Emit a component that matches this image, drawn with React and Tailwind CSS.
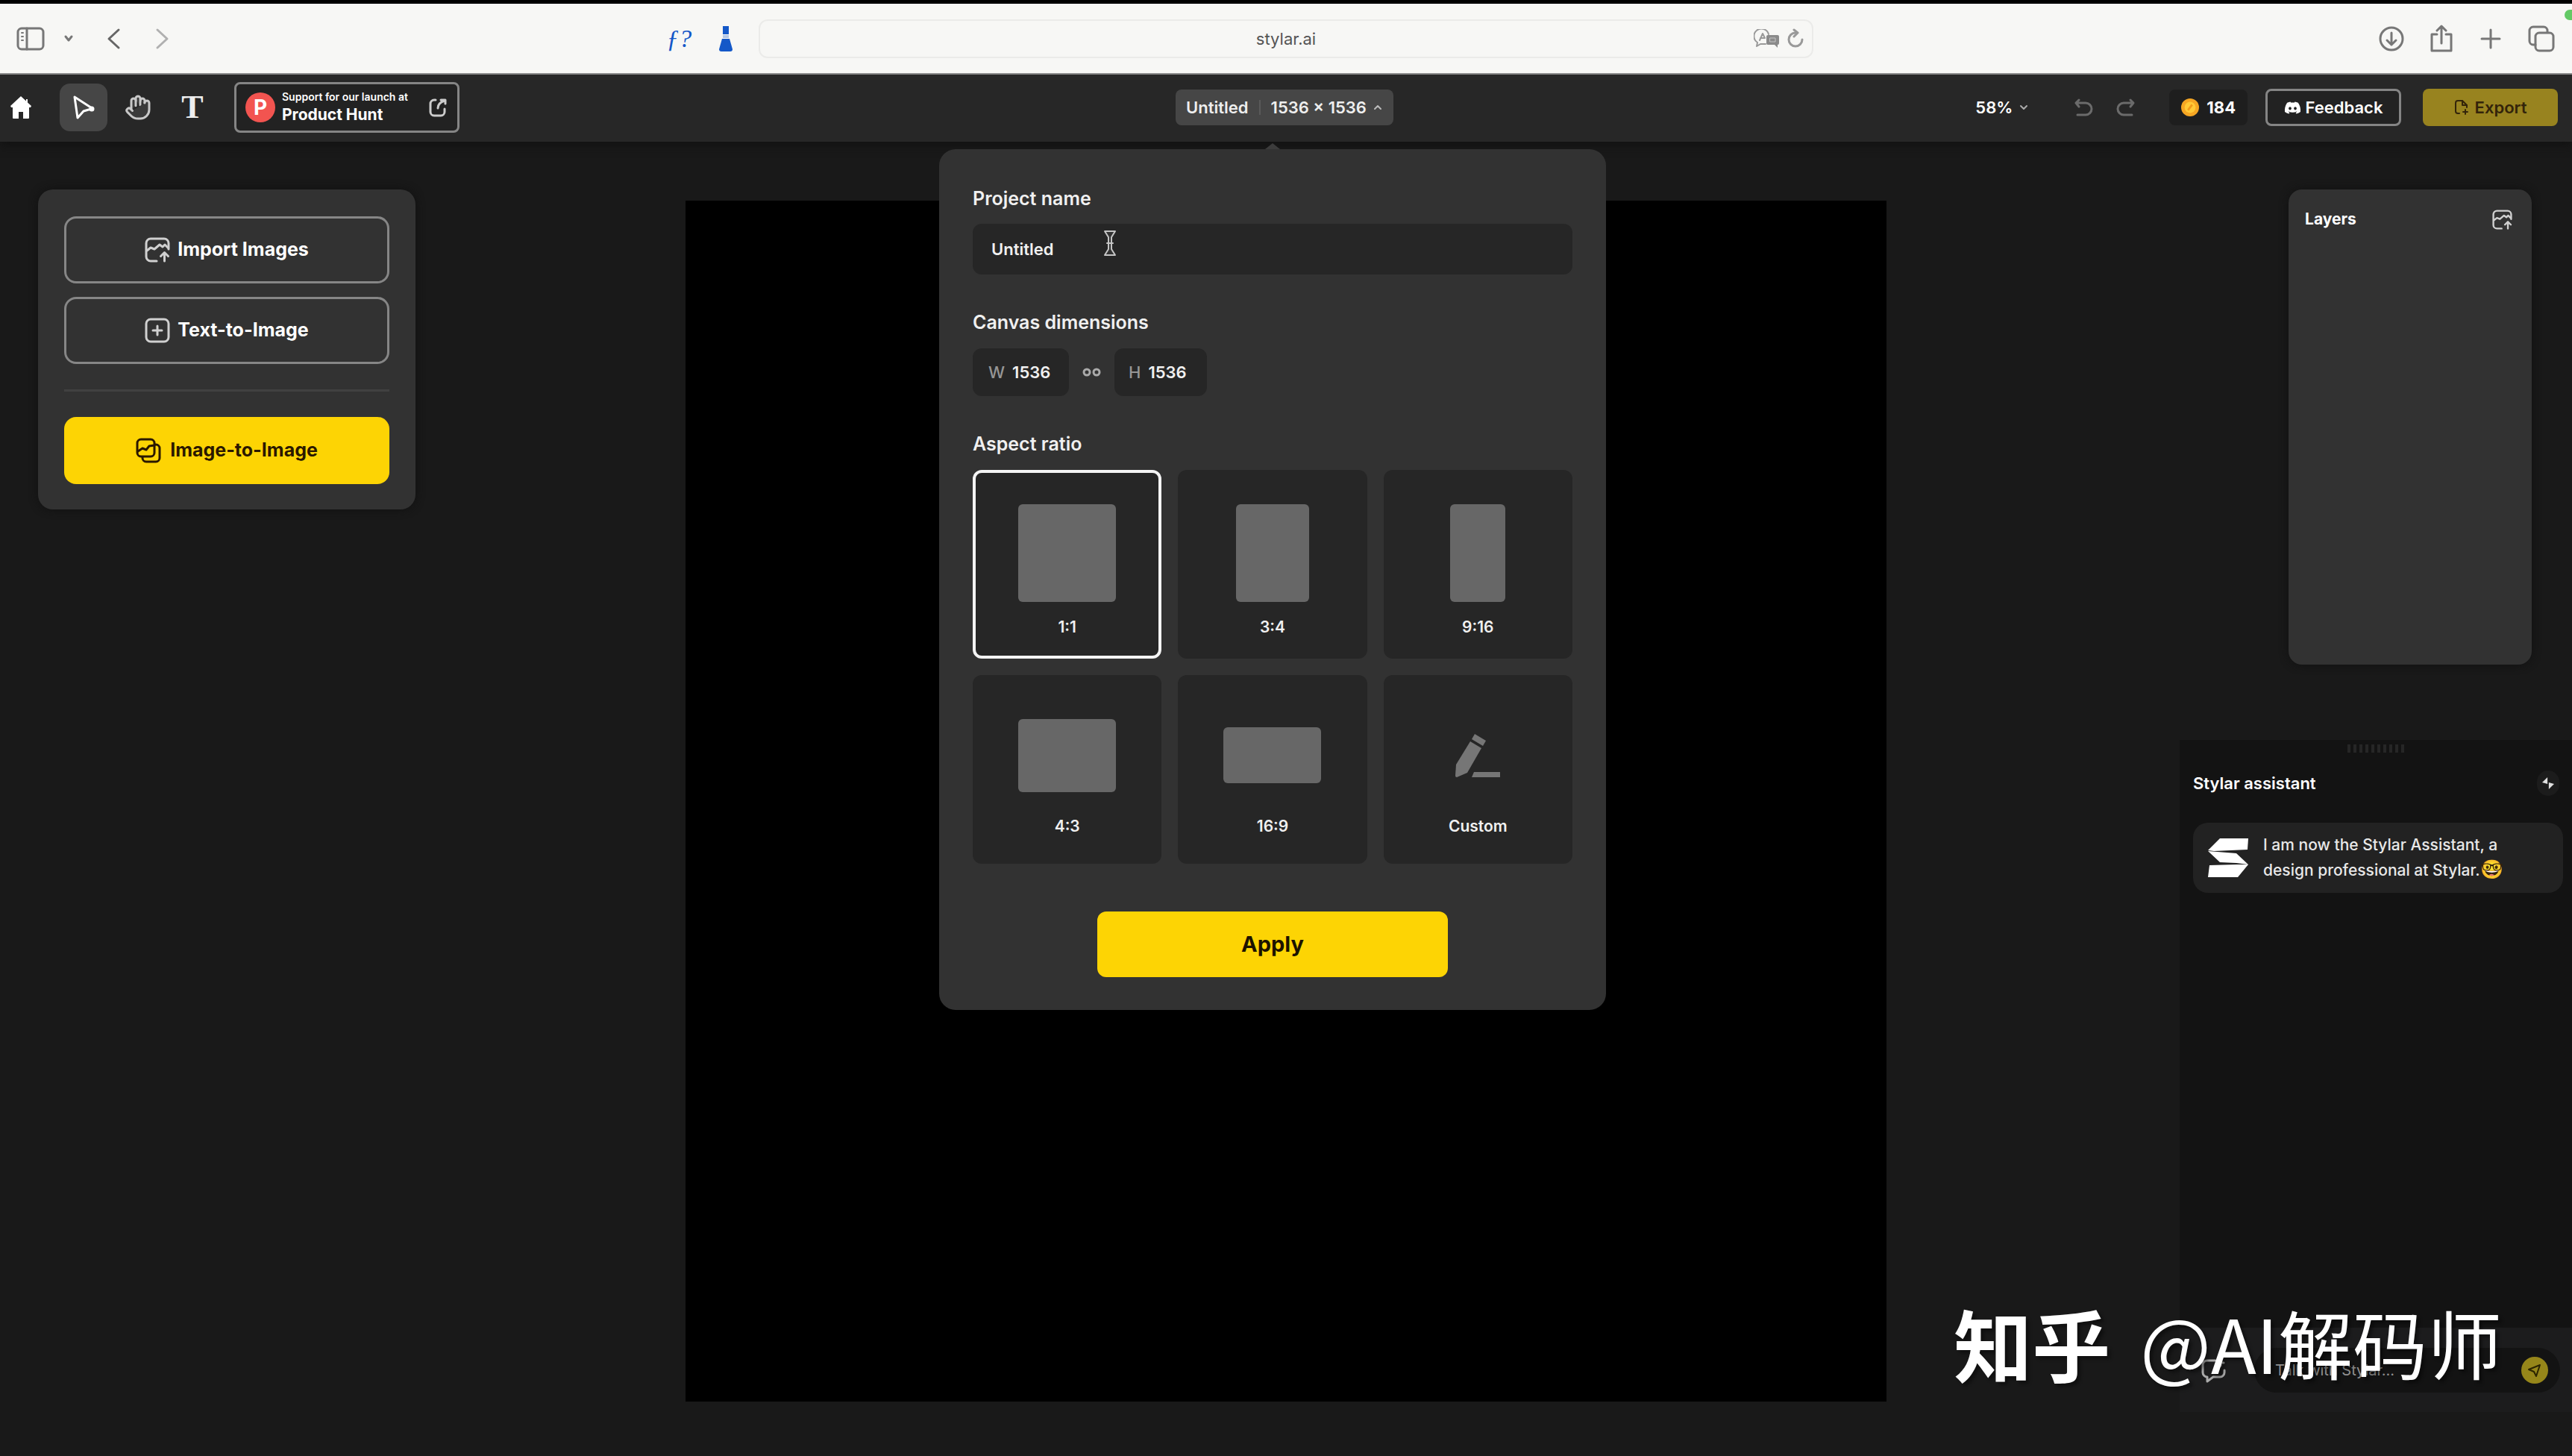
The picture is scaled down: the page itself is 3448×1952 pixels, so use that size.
import { useState } from "react";
import { Hand } from "lucide-react";
import { FaDiscord } from "react-icons/fa";

function Icon({ w = 24, h = 24, className = "", sw = 2, children }) {
  return (
    <svg
      viewBox={`0 0 ${w} ${h}`}
      width={w}
      height={h}
      fill="none"
      stroke="currentColor"
      strokeWidth={sw}
      strokeLinecap="round"
      strokeLinejoin="round"
      aria-hidden="true"
      className={`shrink-0 ${className}`}
    >
      {children}
    </svg>
  );
}

function ImageUpIcon({ className }) {
  return (
    <svg viewBox="0 0 34 34" fill="none" stroke="currentColor" strokeWidth="3" strokeLinecap="round" strokeLinejoin="round" aria-hidden="true" className={className}>
      <path d="M16 32H8a6 6 0 0 1-6-6V8a6 6 0 0 1 6-6h18a6 6 0 0 1 6 6v8" />
      <path d="M3 18l5-4 5 2 7-6 4 3 3-3 4 4" />
      <path d="M26.500 32V21M21.500 25.500l5-5 5 5" />
    </svg>
  );
}

const RATIOS = [
  { label: "1:1", shape: "w-[131px] h-[131px]", pad: "pt-[46px] gap-5" },
  { label: "3:4", shape: "w-[98px] h-[131px]", pad: "pt-[46px] gap-5" },
  { label: "9:16", shape: "w-[74px] h-[131px]", pad: "pt-[46px] gap-5" },
  { label: "4:3", shape: "w-[131px] h-[98px]", pad: "pt-[42px] gap-4" },
  { label: "16:9", shape: "w-[131px] h-[75px]", pad: "pt-[42px] gap-4" },
  { label: "Custom", shape: null, pad: "pt-[42px] gap-4" },
];

function BrowserBar() {
  return (
    <div className="h-[100px] bg-[#f7f7f5] border-t-[5px] border-t-black border-b-2 border-b-[#8a8a8a] flex items-center text-[#777] relative">
      <div className="flex-1 flex items-center pl-[22px]">
        <button aria-label="Sidebar">
          <Icon w={38} h={32} sw={3}>
            <rect x="2" y="2" width="34" height="28" rx="5" />
            <path d="M14 2v28" />
            <path d="M7 8h2M7 13h2M7 18h2" strokeWidth="2" />
          </Icon>
        </button>
        <button aria-label="Tab groups" className="ml-6">
          <Icon w={16} h={12} sw={3}><path d="M4 3l4 5 4-5" /></Icon>
        </button>
        <button aria-label="Back" className="ml-[43px] text-[#666]">
          <Icon w={20} h={30} sw={3}><path d="M16 3L3 15l13 12" /></Icon>
        </button>
        <button aria-label="Forward" className="ml-11 text-[#b0b0b0]">
          <Icon w={20} h={30} sw={3}><path d="M4 3l13 12L4 27" /></Icon>
        </button>
        <div className="ml-auto flex items-center gap-9 pr-[34px] text-[#1458c8]">
          <button className="font-['Liberation_Serif',serif] italic text-[34px] leading-9">ƒ?</button>
          <button aria-label="Flask">
            <svg viewBox="0 0 20 36" width="20" height="36" fill="currentColor" aria-hidden="true">
              <path d="M6 1h8v11H6z" />
              <path d="M6 13h8v4H6z" opacity=".3" />
              <path d="M5 18h10l4 14q0 3-3 3H4q-3 0-3-3z" />
            </svg>
          </button>
        </div>
      </div>
      <div className="relative w-[41%]">
        <input
          aria-label="Address"
          defaultValue="stylar.ai"
          className="w-full h-[52px] border-2 border-[#ebebe9] rounded-xl text-center text-[22px] text-[#555] bg-transparent"
        />
        <div className="absolute right-3 inset-y-0 flex items-center gap-2 text-[#999]">
          <Icon w={36} h={26} sw={2}>
            <path d="M16 20H9l-5 3 1-5a10 10 0 1 1 15-11" />
            <path d="M8 15l4-9 3 6M9 12h5" />
            <path d="M19 8h13q2 0 2 2v9q0 2-2 2v4l-4-4h-9q-2 0-2-2v-9q0-2 2-2z" fill="#8a8a8a" stroke="none" />
            <path d="M22 12h7v5h-7z" stroke="#c4c4c4" strokeWidth="1" />
          </Icon>
          <button aria-label="Reload">
            <Icon w={24} h={28} sw={3}>
              <path d="M12 6a9 9 0 1 0 9 9" />
              <path d="M10 2l5 4-5 5" />
            </Icon>
          </button>
        </div>
      </div>
      <div className="flex-1 flex items-center justify-end gap-8 pr-[22px]">
        <button aria-label="Downloads">
          <Icon w={36} h={36} sw={3}><circle cx="18" cy="18" r="15" /><path d="M18 10v16M12 20l6 6 6-6" /></Icon>
        </button>
        <button aria-label="Share">
          <Icon w={34} h={38} sw={3}><path d="M11 13H4v22h26V13h-7M17 25V3M11 8l6-6 6 6" /></Icon>
        </button>
        <button aria-label="New tab">
          <Icon w={34} h={30} sw={3}><path d="M17 3v24M5 15h24" /></Icon>
        </button>
        <button aria-label="Tabs">
          <Icon w={38} h={36} sw={3}>
            <rect x="11" y="10" width="24" height="24" rx="5" />
            <path d="M11 26H8a5 5 0 0 1-5-5V7a5 5 0 0 1 5-5h14a5 5 0 0 1 5 5v2" />
          </Icon>
        </button>
      </div>
      <span className="absolute right-0 top-2 w-[10px] h-[14px] rounded-l-full bg-[#63c965]" />
    </div>
  );
}

function Toolbar({ name, open, onToggle }) {
  const tool = "w-16 h-16 rounded-[14px] flex items-center justify-center";
  return (
    <header className="h-[90px] pr-1 pb-[2px] bg-[#272727] flex items-center text-white text-[22px] font-semibold shadow-[0_4px_12px_#111]">
      <div className="flex-1 flex items-center">
        <button aria-label="Home" className="w-14 flex justify-center">
          <svg viewBox="0 0 30 32" width="30" height="32" fill="currentColor" aria-hidden="true">
            <path d="M15 1L1 14l1 2h2v14q0 1 1 1h7v-9h6v9h7q1 0 1-1V16h2l1-2-5-4.500V5h-2v2.500z" />
          </svg>
        </button>
        <div className="ml-6 flex items-center gap-[9px]">
          <button aria-label="Select" className={`${tool} bg-[#464646]`}>
            <Icon w={32} h={34} sw={3}>
              <path d="M4 3L28 18.500 16 22 8 31z" />
              <circle cx="27" cy="19" r="2" fill="currentColor" />
            </Icon>
          </button>
          <button aria-label="Pan" className={`${tool} text-[#c8c8c8]`}>
            <Hand size={36} strokeWidth={2} fill="#3a3a3a" />
          </button>
          <button aria-label="Text" className={`${tool} font-['Liberation_Serif',serif] font-bold text-[44px] leading-none text-[#eee]`}>
            T
          </button>
        </div>
        <a href="#producthunt" className="ml-6 h-[68px] w-[302px] border-[3px] border-[#858585] rounded-lg bg-[#222] flex items-center pl-3 pr-[14px]">
          <span className="w-10 h-10 rounded-full bg-[#f25450] text-[28px] leading-10 font-bold text-center">P</span>
          <span className="ml-[9px] flex flex-col">
            <span className="text-[14px] leading-5">Support for our launch at</span>
            <span className="text-[21px] leading-7 font-bold">Product Hunt</span>
          </span>
          <Icon w={24} h={26} sw={3} className="ml-auto text-[#ccc]">
            <path d="M9 3H7a5 5 0 0 0-5 5v11a5 5 0 0 0 5 5h9a5 5 0 0 0 5-5v-4" />
            <path d="M12 14q0-7 9-10M16 3h6v5" />
          </Icon>
        </a>
      </div>

      <button onClick={onToggle} aria-expanded={open} className="h-12 px-[14px] bg-[#464646] rounded-lg flex items-center text-[#eee]">
        <span>{name}</span>
        <span className="w-[2px] h-5 bg-[#5a5a5a] mx-[14px]" />
        <span>1536 × 1536</span>
        <Icon w={14} h={12} sw={2} className="ml-2 text-[#bbb]"><path d="M3 8l4-4 4 4" /></Icon>
      </button>

      <div className="flex-1 flex items-center justify-end">
        <div className="relative flex items-center">
          <select aria-label="Zoom" defaultValue="58%" className="appearance-none bg-transparent pr-[22px] focus:outline-none">
            <option>58%</option>
            <option>25%</option>
          </select>
          <Icon w={16} h={12} sw={2} className="absolute right-0 pointer-events-none text-[#aaa]"><path d="M4 4l4 4 4-4" /></Icon>
        </div>
        <button aria-label="Undo" className="ml-[58px] text-[#6b6b6b]">
          <Icon w={28} h={28} sw={3}><path d="M8 4L4 8l4 5M5 8h12a8 8 0 0 1 0 16H6" /></Icon>
        </button>
        <button aria-label="Redo" className="ml-[29px] text-[#6b6b6b]">
          <Icon w={28} h={28} sw={3}><path d="M20 4l4 4-4 5M23 8H11a8 8 0 0 0 0 16h11" /></Icon>
        </button>
        <div className="ml-11 h-12 px-4 rounded-lg bg-[#1e1e1e] flex items-center gap-[10px] font-bold">
          <svg viewBox="0 0 26 26" width="24" height="26" aria-hidden="true">
            <circle cx="13" cy="13" r="13" fill="#f5a623" />
            <circle cx="13" cy="13" r="8" fill="#ffc936" />
            <path d="M10 17l6-8" stroke="#f09a1a" strokeWidth="3" />
          </svg>
          184
        </div>
        <button className="ml-6 h-[50px] w-[182px] border-[3px] border-[#858585] rounded-lg bg-[#222] flex items-center justify-center gap-[6px]">
          <FaDiscord size={23} /> Feedback
        </button>
        <button className="ml-[29px] mr-[15px] h-[50px] w-[181px] rounded-lg bg-[#98831f] text-[#33240a] flex items-center justify-center gap-2">
          <Icon w={20} h={22} sw={2}>
            <path d="M7 19H5q-3 0-3-3V5q0-3 3-3h6l6 6v3" />
            <path d="M11 2v6h6" />
            <path d="M12 17h6M15 14v6" />
          </Icon>
          Export
        </button>
      </div>
    </header>
  );
}

function ActionPanel() {
  const outline = "h-[90px] rounded-2xl border-[3px] border-[#868686] flex items-center justify-center gap-[10px]";
  return (
    <aside className="mt-16 ml-[51px] w-[506px] bg-[#323232] rounded-[20px] px-[35px] pt-9 pb-[34px] text-white text-[25px] font-bold flex flex-col shadow-[0_0_12px_#111]">
      <button className={outline}>
        <ImageUpIcon className="w-[34px] h-[34px] text-[#d0d0d0]" /> Import Images
      </button>
      <button className={`${outline} mt-[18px]`}>
        <Icon w={34} h={34} sw={3} className="text-[#d0d0d0]">
          <rect x="2" y="2" width="30" height="30" rx="6" /><path d="M17 11v12M11 17h12" />
        </Icon>
        Text-to-Image
      </button>
      <hr className="mt-[34px] mb-[34px] border-t-[3px] border-[#414141]" />
      <button className="h-[90px] rounded-2xl bg-[#fdd404] text-[#2b1800] flex items-center justify-center gap-3">
        <Icon w={34} h={34} sw={3}>
          <rect x="2" y="2" width="23" height="23" rx="5" />
          <path d="M26 9h1a5 5 0 0 1 5 5v13a5 5 0 0 1-5 5H14a5 5 0 0 1-5-5v-1" />
          <path d="M3 18l6-4 5 2 4-5 7-1" />
        </Icon>
        Image-to-Image
      </button>
    </aside>
  );
}

function ProjectPopover({ name, setName }) {
  const [ratio, setRatio] = useState("1:1");
  const label = "text-[25px] leading-8 font-semibold";
  const field = "h-16 rounded-xl bg-[#262626] flex items-center gap-[10px] text-[22px] font-semibold";
  return (
    <div className="absolute z-10 left-[1259px] top-[10px] w-[894px] rounded-[22px] bg-[#323232] px-[45px] pt-[50px] pb-11 text-[#f0f0f0] flex flex-col">
      <span className="absolute -top-2 left-1/2 -translate-x-1/2 border-x-[10px] border-x-transparent border-b-8 border-b-[#3c3c3c]" />

      <label htmlFor="project-name" className={label}>Project name</label>
      <input
        id="project-name"
        value={name}
        onChange={e => setName(e.target.value)}
        className="mt-[18px] h-[68px] rounded-xl bg-[#262626] px-[25px] text-[22px] font-semibold focus:outline-none"
      />
      <Icon w={18} h={36} sw={2} className="absolute left-[220px] top-[108px] text-[#c4c4c4]">
        <path d="M2 2h14L11 10v16l5 8H2l5-8V10z" fill="#333" />
        <path d="M5 18h8" />
      </Icon>

      <div className={`${label} mt-12`}>Canvas dimensions</div>
      <div className="mt-[19px] flex items-center">
        <label className={`${field} w-[129px] pl-[21px]`}>
          <span className="font-medium text-[#969696]">W</span>
          <input defaultValue="1536" className="w-16 bg-transparent" />
        </label>
        <button aria-label="Link dimensions" className="mx-[17px] text-[#aaa]">
          <Icon w={27} h={14} sw={3}><circle cx="7" cy="7" r="4" /><circle cx="20" cy="7" r="4" /></Icon>
        </button>
        <label className={`${field} w-[124px] pl-[19px]`}>
          <span className="font-medium text-[#969696]">H</span>
          <input defaultValue="1536" className="w-16 bg-transparent" />
        </label>
      </div>

      <div className={`${label} mt-12`}>Aspect ratio</div>
      <div className="mt-[19px] grid grid-cols-3 gap-[22px]">
        {RATIOS.map(r => (
          <button
            key={r.label}
            onClick={() => setRatio(r.label)}
            aria-pressed={ratio === r.label}
            className={`h-[253px] rounded-xl bg-[#262626] flex flex-col items-center outline-solid -outline-offset-4 ${r.pad} ${
              ratio === r.label ? "outline-4 outline-[#f4f4f4]" : "outline-0"
            }`}
          >
            <span className="h-[131px] flex items-center justify-center">
              {r.shape ? (
                <span className={`${r.shape} rounded-md bg-[#676767]`} />
              ) : (
                <svg viewBox="0 0 60 60" width="60" height="60" fill="#767676" aria-hidden="true">
                  <path d="M26 1l15 9-4 7-15-9z" />
                  <path d="M20 11l15 9-19 33-14 6q-2 0-2-2l1-15z" />
                  <path d="M25 52h35v7H22z" />
                </svg>
              )}
            </span>
            <span className="text-[21px] leading-7 font-semibold">{r.label}</span>
          </button>
        ))}
      </div>

      <button className="mt-16 self-center w-[470px] h-[88px] rounded-xl bg-[#fdd404] text-[#1c1200] text-[29px] font-bold">
        Apply
      </button>
    </div>
  );
}

function LayersPanel() {
  return (
    <section className="mt-16 mr-[54px] self-end w-[326px] h-[637px] rounded-[18px] bg-[#323232] px-[22px] pt-[26px] text-white shadow-[0_0_12px_#111]">
      <div className="flex items-center justify-between">
        <h2 className="text-[21px] leading-7 font-bold">Layers</h2>
        <button aria-label="Add layer" className="mr-1 text-[#d0d0d0]">
          <ImageUpIcon className="w-[27px] h-[27px]" />
        </button>
      </div>
    </section>
  );
}

function AssistantPanel() {
  return (
    <section className="mt-[101px] mb-[59px] flex-1 self-end w-[526px] bg-[#131313] text-white flex flex-col">
      <div className="mt-[6px] self-center flex gap-1">
        {Array.from({ length: 10 }, (_, i) => (
          <span key={i} className="w-1 h-[11px] bg-[#262626]" />
        ))}
      </div>
      <div className="mt-6 pl-[18px] pr-[17px] flex items-center justify-between">
        <h2 className="text-[22px] leading-8 font-semibold">Stylar assistant</h2>
        <button aria-label="Collapse" className="w-[30px] h-[34px] rounded-full bg-[#1c1c1c] flex items-center justify-center">
          <svg viewBox="0 0 18 18" width="16" height="18" fill="#e0e0e0" aria-hidden="true">
            <path d="M8 0v10L0 8z" /><path d="M10 18V8l8 2z" />
          </svg>
        </button>
      </div>
      <div className="mt-9 ml-[18px] mr-3 rounded-[20px] bg-[#222] py-[14px] px-5 flex items-center">
        <svg viewBox="0 0 54 52" width="54" height="52" fill="#fff" aria-hidden="true" className="shrink-0">
          <path d="M16 0h38l-1 15-45 2-8-1z" />
          <path d="M0 17l38 3 16 15-16-2-22-1z" />
          <path d="M2 36l36-1 16 0-14 17H0z" />
        </svg>
        <p className="ml-5 text-[21px] leading-8 font-medium whitespace-nowrap text-[#e8e8e8]">
          I am now the Stylar Assistant, a<br />design professional at Stylar.<span className="text-[25px]">🤓</span>
        </p>
      </div>
      <div className="mt-auto h-[113px] bg-[#1c1c1d] flex items-center pl-7 pr-4">
        <Icon w={36} h={34} sw={3} className="text-[#aaa]">
          <path d="M20 4H9a6 6 0 0 0-6 6v10a6 6 0 0 0 6 6v6l8-6h9a6 6 0 0 0 6-6v-3" />
          <path d="M27 3v8M23 7h8" />
        </Icon>
        <div className="ml-9 flex-1 h-[60px] rounded-full bg-[#131313] flex items-center pl-7 pr-4">
          <input aria-label="Message" placeholder="Talk with Stylar..." className="flex-1 min-w-0 bg-transparent text-[20px] placeholder:text-[#909090]" />
          <button aria-label="Send" className="w-9 h-9 rounded-full bg-[#96861a] text-[#2b2400] flex items-center justify-center">
            <Icon w={20} h={20} sw={2}><path d="M17 3L2 9l7 3 3 6z" /></Icon>
          </button>
        </div>
      </div>
    </section>
  );
}

export default function App() {
  const [name, setName] = useState("Untitled");
  const [open, setOpen] = useState(true);

  return (
    <div className="relative min-h-screen flex flex-col bg-[#191919] font-['Inter','Noto_Sans_CJK_SC',sans-serif]">
      <BrowserBar />
      <Toolbar name={name} open={open} onToggle={() => setOpen(!open)} />

      <main className="relative flex-1 flex">
        <div className="flex-1">
          <ActionPanel />
        </div>
        <div className="mt-[79px] w-[46.7%] aspect-square self-start bg-black" />
        <div className="flex-1 flex flex-col">
          <LayersPanel />
          <AssistantPanel />
        </div>
        {open && <ProjectPopover name={name} setName={setName} />}
      </main>

      <div className="absolute right-[94px] bottom-[81px] pointer-events-none flex items-center gap-10 text-white text-[100px] leading-[144px] whitespace-nowrap font-['Noto_Sans_CJK_SC',sans-serif] [text-shadow:4px_4px_4px_#0006]">
        <span className="font-bold text-[105px]">知乎</span>
        <span>@AI解码师</span>
      </div>
    </div>
  );
}
